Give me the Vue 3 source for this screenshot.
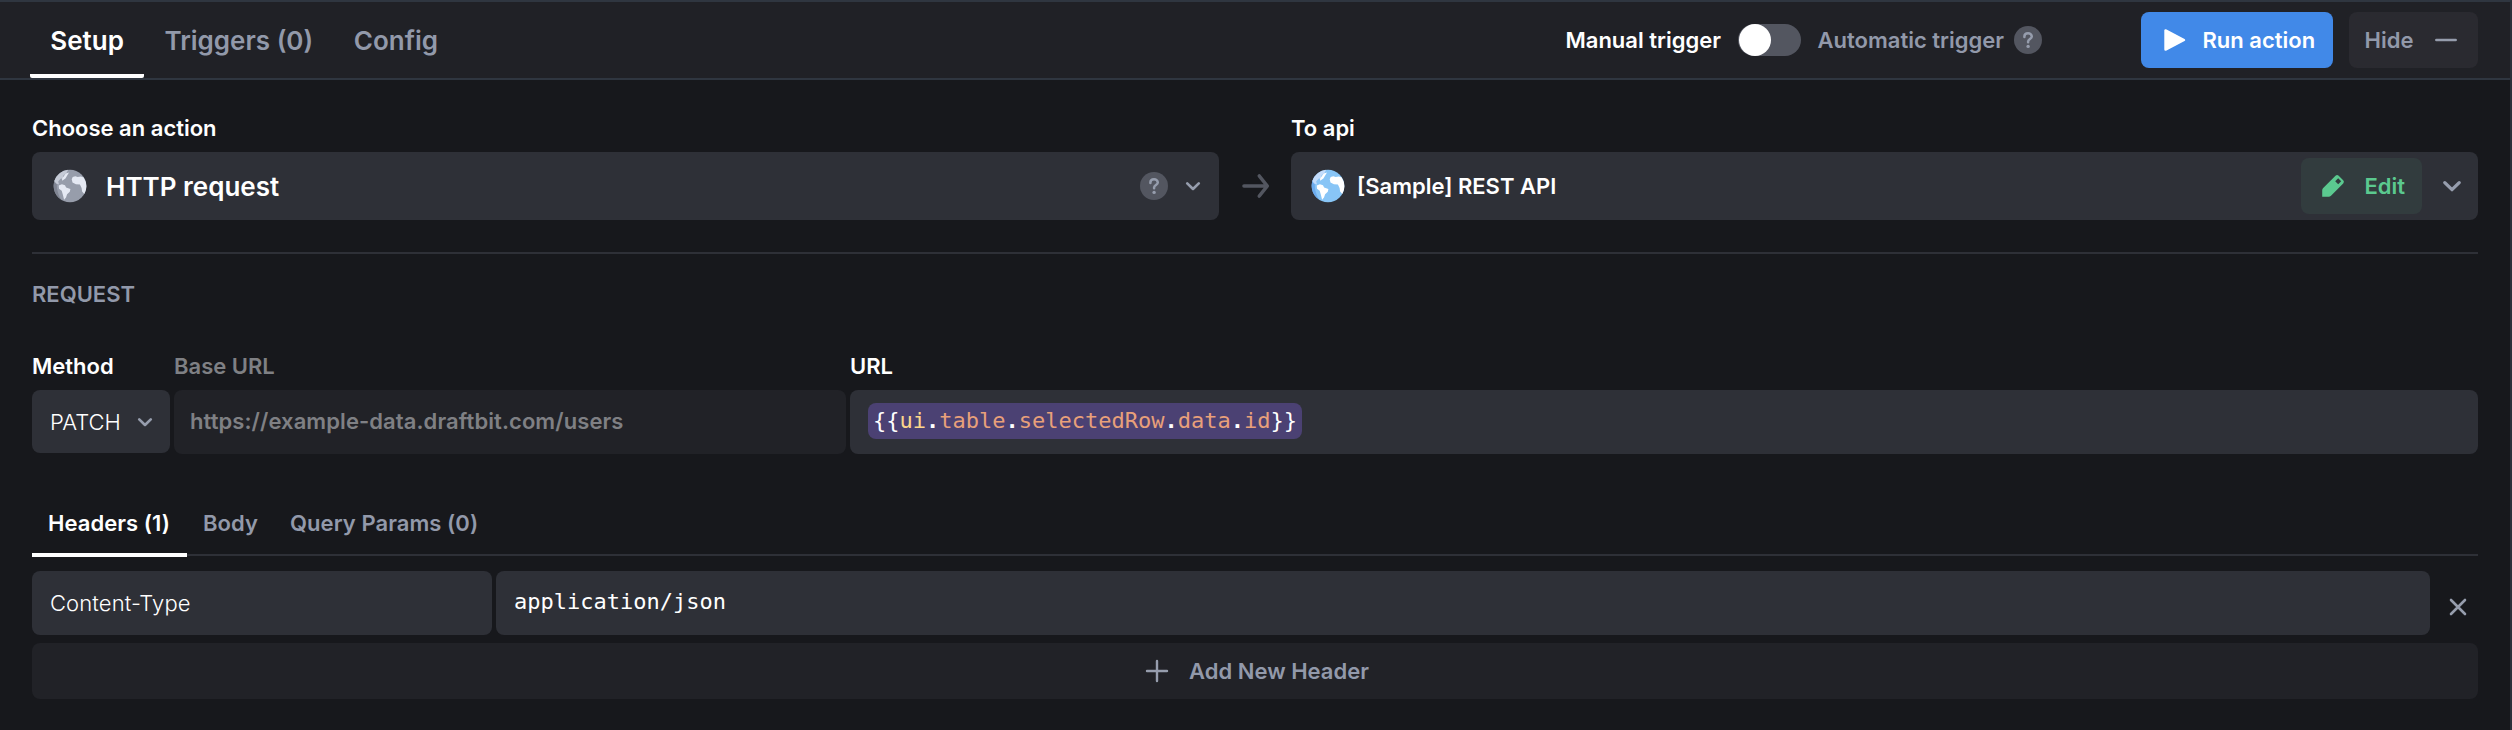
<script setup>
import { h } from 'vue'

const tabs = [
  { label: 'Setup', active: true },
  { label: 'Triggers (0)' },
  { label: 'Config' },
]
const subTabs = [
  { label: 'Headers (1)', active: true },
  { label: 'Body' },
  { label: 'Query Params (0)' },
]
const tokens = [
  { t: '{{', c: 'brace' },
  { t: 'ui', c: 'root' },
  { t: '.', c: 'dot' },
  { t: 'table', c: 'prop' },
  { t: '.', c: 'dot' },
  { t: 'selectedRow', c: 'prop' },
  { t: '.', c: 'dot' },
  { t: 'data', c: 'prop' },
  { t: '.', c: 'dot' },
  { t: 'id', c: 'prop' },
  { t: '}}', c: 'brace' },
]

const Globe = (props) =>
  h('svg', { width: 34, height: 34, viewBox: '0 0 34 34' }, [
    h('circle', { cx: 17, cy: 17, r: 16.3, fill: props.shade }),
    h('path', { d: 'M4.5 6.5A16.3 16.3 0 0 0 8 30.6Q1.8 20 4.5 6.5Z', fill: props.edge }),
    h('path', { d: 'M15.2.8A16.3 16.3 0 0 0 1.3 12L3 14.5 6 15.6 5.2 12.6 7.5 9.8 10.2 9.2 10 7.1 13.6 3.8Z', fill: props.pale }),
    h('path', { d: 'M9 9.7l3.7-5.2 3.3-.9-3.6 5.9-3.2 2.2zM5.7 16.5l3.2-1.3 3.1 1.1 1.1 2.2 4.3 1.5-.6 2.8-2.7 2.5-1.1 3.1-1.9 2.4-1.3-5.3-1.1-3.8-2.7-2zM18.7 10.2l1-2.3 2.6-.6 2.4.6 3.2-.3 2.8.9A16.3 16.3 0 0 1 31.3 25l-2.2-2.4-.5-3.6-1.7-3.5-4-.2-3.4-1.9z', fill: props.land }),
  ])
Globe.props = ['shade', 'edge', 'pale', 'land']

const Chevron = (props) =>
  h('svg', { width: props.w, height: props.w, viewBox: '0 0 18 18', class: 'chevron' }, [
    h('path', { d: 'M2.5 6l6.5 6.3L15.5 6', fill: 'none', stroke: '#969dad', 'stroke-width': 3, 'stroke-linecap': 'round', 'stroke-linejoin': 'round' }),
  ])
Chevron.props = ['w']

const Help = () =>
  h('svg', { width: 28, height: 28, viewBox: '0 0 28 28', class: 'help' }, [
    h('circle', { cx: 14, cy: 14, r: 14, fill: '#535660' }),
    h('path', { d: 'M10.4 11V10.6C10.4 8.5 12 7.3 14 7.3S17.8 8.6 17.8 10.6C17.8 13 14.1 13.2 14.1 15.6V16.2', fill: 'none', stroke: '#969dad', 'stroke-width': 2.5, 'stroke-linecap': 'round' }),
    h('circle', { cx: 14.1, cy: 20.4, r: 1.7, fill: '#969dad' }),
  ])
</script>

<template>
  <div class="panel">
    <header class="topbar">
      <nav class="tabs">
        <div v-for="t in tabs" :key="t.label" class="tab" :class="{ active: t.active }">{{ t.label }}</div>
      </nav>
      <div class="trigger">
        <span class="manual">Manual trigger</span>
        <span class="toggle"><span class="knob"></span></span>
        <span class="auto">Automatic trigger</span>
        <Help />
      </div>
      <button class="run">
        <svg width="22" height="24" viewBox="0 0 22 24"><path d="M1.5 2.4v19.2L20 12z" fill="#fff" stroke="#fff" stroke-width="2.4" stroke-linejoin="round" /></svg>
        <span>Run action</span>
      </button>
      <button class="hide">
        <span>Hide</span>
        <svg width="22" height="4" viewBox="0 0 22 4"><path d="M1.4 2h19.2" stroke="#969dad" stroke-width="2.7" stroke-linecap="round" /></svg>
      </button>
    </header>

    <main>
      <section class="pickers">
        <div class="picker">
          <label>Choose an action</label>
          <div class="select">
            <Globe shade="#979dab" edge="#7f8492" pale="#c5cad6" land="#e5e9f3" />
            <span class="action-name">HTTP request</span>
            <Help />
            <Chevron w="16" />
          </div>
        </div>
        <div class="arrow">
          <svg width="28" height="26" viewBox="0 0 28 26"><path d="M2 13h23M17.3 3L25.3 13l-8 10" fill="none" stroke="#535660" stroke-width="3.6" stroke-linecap="round" stroke-linejoin="round" /></svg>
        </div>
        <div class="picker api">
          <label>To api</label>
          <div class="select">
            <Globe shade="#88c5f6" edge="#6cabee" pale="#c3dcfb" land="#fff" />
            <span class="api-name">[Sample] REST API</span>
            <button class="edit">
              <svg width="24" height="24" viewBox="0 0 24 24">
                <path d="M1.2 22.8V16.5Q1.2 15.1 2.2 14.1L14.5 1.8Q16.1.3 17.7 1.8L22.2 6.3Q23.7 7.9 22.2 9.5L10 21.8Q9 22.8 7.6 22.8Z" fill="#5bc98f" />
                <path d="M17.2 4.3l3 3-3 3-3-3z" fill="#323c3e" />
              </svg>
              <span>Edit</span>
            </button>
            <Chevron w="20" />
          </div>
        </div>
      </section>

      <hr />
      <h2>REQUEST</h2>

      <section class="request">
        <div class="method">
          <label>Method</label>
          <div class="field"><span>PATCH</span><Chevron w="16" /></div>
        </div>
        <div class="base">
          <label>Base URL</label>
          <div class="field">https://example-data.draftbit.com/users</div>
        </div>
        <div class="url">
          <label>URL</label>
          <div class="field">
            <span class="chip"><span v-for="(k, i) in tokens" :key="i" :class="k.c">{{ k.t }}</span></span>
          </div>
        </div>
      </section>

      <nav class="subtabs">
        <div v-for="t in subTabs" :key="t.label" class="subtab" :class="{ active: t.active }">{{ t.label }}</div>
      </nav>

      <div class="row">
        <div class="field key">Content-Type</div>
        <div class="field value">application/json</div>
        <button class="remove">
          <svg width="18" height="18" viewBox="0 0 18 18"><path d="M2 2l14 14M16 2L2 16" stroke="#969dad" stroke-width="2.6" stroke-linecap="round" /></svg>
        </button>
      </div>
      <button class="add">
        <svg width="24" height="24" viewBox="0 0 24 24"><path d="M2 12h20M12 2v20" stroke="#969dad" stroke-width="2.4" stroke-linecap="round" /></svg>
        <span>Add New Header</span>
      </button>
    </main>
  </div>
</template>

<style>
body {
  margin: 0;
  background: #17181c;
}
</style>

<style scoped>
.panel {
  box-sizing: border-box;
  width: 2512px;
  height: 730px;
  overflow: hidden;
  background: #17181c;
  border-top: 2px solid #2f3640;
  border-right: 2px solid #2b313a;
  font-family: Inter, "Liberation Sans", sans-serif;
  font-size: 22px;
  font-weight: 500;
  line-height: 28px;
  color: #fff;
}
button {
  border: 0;
  padding: 0;
  font: inherit;
  background: none;
  color: inherit;
  display: flex;
  align-items: center;
  border-radius: 8px;
  box-sizing: border-box;
}
svg {
  flex: none;
  display: block;
}
.topbar {
  display: flex;
  align-items: center;
  box-sizing: border-box;
  height: 78px;
  padding: 0 32px 0 30px;
  background: #202126;
  border-bottom: 2px solid #2f3640;
}
.tabs {
  display: flex;
  align-self: stretch;
  margin-right: auto;
}
.tab {
  box-sizing: border-box;
  padding: 0 20.3px;
  font-size: 26px;
  font-weight: 600;
  line-height: 78px;
  height: 76px;
  color: #9299aa;
}
.tab.active {
  color: #fff;
  border-bottom: 4px solid #fff;
  border-radius: 2px;
}
.trigger {
  display: flex;
  align-items: center;
}
.manual,
.auto,
.run,
.hide {
  font-weight: 600;
}
.auto {
  color: #9299aa;
  margin-right: 10px;
}
.toggle {
  width: 63px;
  height: 32px;
  border-radius: 16px;
  background: #535660;
  margin: 0 17px 0 16.5px;
}
.knob {
  display: block;
  width: 32px;
  height: 32px;
  margin-left: 1px;
  border-radius: 50%;
  background: #fff;
}
.run {
  width: 192px;
  height: 56px;
  margin-left: 99px;
  padding-left: 23px;
  gap: 16.5px;
  background: #4189e8;
  white-space: nowrap;
}
.hide {
  width: 129px;
  height: 56px;
  margin-left: 16px;
  padding: 0 21px 0 15.5px;
  justify-content: space-between;
  background: #2a2a30;
  color: #9299aa;
}
main {
  padding: 34px 32px 0;
}
label {
  display: block;
  line-height: 28px;
  font-weight: 600;
}
.pickers {
  display: flex;
}
.picker {
  width: 1187px;
}
.arrow {
  box-sizing: border-box;
  width: 72px;
  display: flex;
  justify-content: center;
  align-items: flex-end;
  padding: 0 0 21px 1px;
}
.select {
  display: flex;
  align-items: center;
  box-sizing: border-box;
  height: 68px;
  margin-top: 10px;
  padding: 0 18px 0 21px;
  border-radius: 8px;
  background: #2e3037;
}
.action-name {
  margin: 0 auto 0 19px;
  padding-top: 2px;
  font-size: 26px;
  font-weight: 600;
}
.select .chevron {
  margin-left: 17px;
}
.api .select {
  padding: 0 16px 0 20px;
}
.api-name {
  margin: 0 auto 0 12px;
  font-weight: 600;
}
.api .chevron {
  margin-left: 20px;
}
.edit {
  width: 121px;
  height: 56px;
  padding-left: 20px;
  gap: 19.5px;
  background: #323c3e;
  color: #5bc98f;
  font-weight: 600;
}
hr {
  height: 2px;
  border: 0;
  margin: 32px 0 0;
  background: #2e3037;
}
h2 {
  margin: 26px 0 0;
  font-size: 22px;
  font-weight: 600;
  line-height: 28px;
  color: #9299aa;
}
.request {
  display: flex;
  gap: 4px;
  margin-top: 44px;
}
.field {
  display: flex;
  align-items: center;
  box-sizing: border-box;
  height: 64px;
  border-radius: 8px;
  background: #2e3037;
}
.request .field {
  margin-top: 10px;
}
.method {
  width: 138px;
}
.method .field {
  height: 63px;
  padding: 0 17px 0 18px;
  justify-content: space-between;
  font-weight: 300;
}
.base {
  width: 672px;
  color: #7f8084;
}
.base .field {
  background: #212227;
  padding: 0 0 2px 16px;
  font-weight: 600;
  letter-spacing: 0.08px;
}
.url {
  flex: 1;
}
.url .field {
  padding-left: 18px;
}
.chip {
  display: block;
  height: 36px;
  line-height: 35px;
  padding: 0 5px;
  margin-bottom: 2px;
  border-radius: 8px;
  background: #4b4173;
  font-family: "DejaVu Sans Mono", monospace;
  font-weight: 400;
  white-space: pre;
}
.dot {
  font-weight: 700;
}
.root {
  color: #fbd68b;
}
.prop {
  color: #e8a07a;
}
.subtabs {
  display: flex;
  height: 57px;
  margin-top: 46px;
  background: linear-gradient(#2e3037, #2e3037) 0 54px / 100% 2px no-repeat;
}
.subtab {
  box-sizing: border-box;
  height: 57px;
  padding: 0 16px;
  line-height: 46px;
  font-weight: 600;
  letter-spacing: 0.06px;
  color: #9299aa;
}
.subtab.active {
  color: #fff;
  padding-right: 17px;
  border-bottom: 4px solid #fff;
}
.row {
  display: flex;
  gap: 4px;
  margin-top: 14px;
}
.key {
  width: 460px;
  padding-left: 18px;
  font-weight: 300;
  letter-spacing: 0.1px;
}
.value {
  width: 1934px;
  padding: 0 0 3px 18px;
  font-family: "DejaVu Sans Mono", monospace;
  font-weight: 400;
}
.remove {
  flex: 1;
  justify-content: center;
  padding: 8px 0 0 4px;
}
.add {
  width: 100%;
  height: 56px;
  margin-top: 8px;
  padding-left: 4px;
  justify-content: center;
  gap: 20px;
  background: #212227;
  color: #9299aa;
  font-weight: 600;
}
</style>
